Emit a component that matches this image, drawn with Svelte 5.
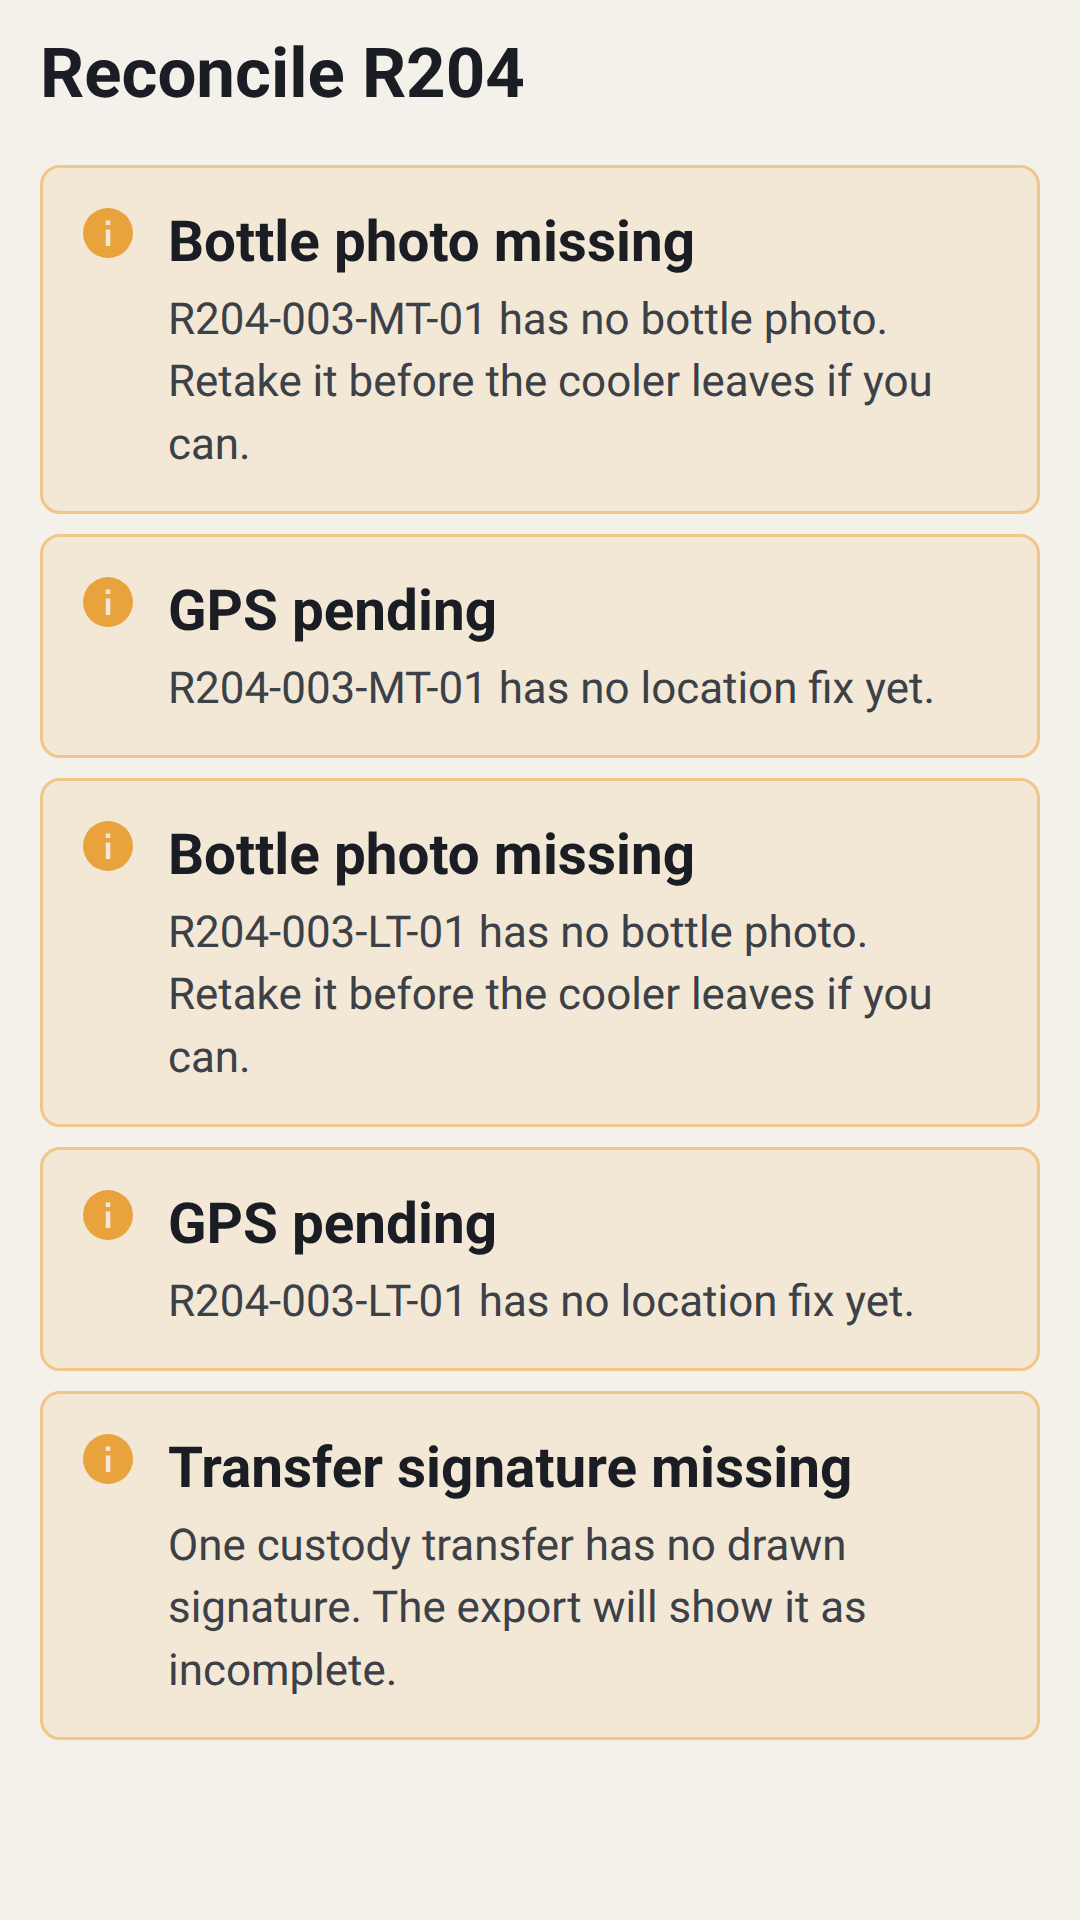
<script>
  const cards = [
    { title: 'Bottle photo missing', body: 'R204-003-MT-01 has no bottle photo. Retake it before the cooler leaves if you can.' },
    { title: 'GPS pending', body: 'R204-003-MT-01 has no location fix yet.' },
    { title: 'Bottle photo missing', body: 'R204-003-LT-01 has no bottle photo. Retake it before the cooler leaves if you can.' },
    { title: 'GPS pending', body: 'R204-003-LT-01 has no location fix yet.' },
    { title: 'Transfer signature missing', body: 'One custody transfer has no drawn signature. The export will show it as incomplete.' }
  ];
</script>

<main class="page">
  <h1>Reconcile R204</h1>
  <div class="list">
    {#each cards as c}
      <section class="card">
        <svg class="icon" viewBox="0 0 50 50" width="50" height="50" aria-hidden="true">
          <circle cx="25" cy="25" r="25" fill="#e9a33d" />
          <rect x="22.8" y="21.5" width="4.5" height="16.5" fill="#f3e8d7" />
          <rect x="22.8" y="12.5" width="4.5" height="4.5" fill="#f3e8d7" />
        </svg>
        <div class="text">
          <h2>{c.title}</h2>
          <p>{c.body}</p>
        </div>
      </section>
    {/each}
  </div>
</main>

<style>
  :global(body) {
    margin: 0;
    background: #f4f1ea;
    font-family: Roboto, sans-serif;
    text-rendering: geometricPrecision;
  }
  .page {
    padding: 34px 40px;
    min-height: 1920px;
    box-sizing: border-box;
  }
  h1 {
    margin: 0 0 51.3px;
    font-size: 69px;
    line-height: 80px;
    font-weight: 700;
    color: #1a1d23;
  }
  .list {
    display: flex;
    flex-direction: column;
    gap: 20px;
  }
  .card {
    display: flex;
    gap: 35px;
    padding: 39.5px 40px 36px;
    background: #f3e8d6;
    border: 3px solid #f0c689;
    border-radius: 20px;
  }
  .icon {
    flex: none;
    margin-top: 0.5px;
  }
  h2 {
    margin: 0 0 12px;
    font-size: 56.6px;
    line-height: 68px;
    font-weight: 700;
    color: #1a1d23;
  }
  p {
    margin: 0;
    font-size: 43.92px;
    line-height: 62.5px;
    color: #3c4047;
  }
</style>
